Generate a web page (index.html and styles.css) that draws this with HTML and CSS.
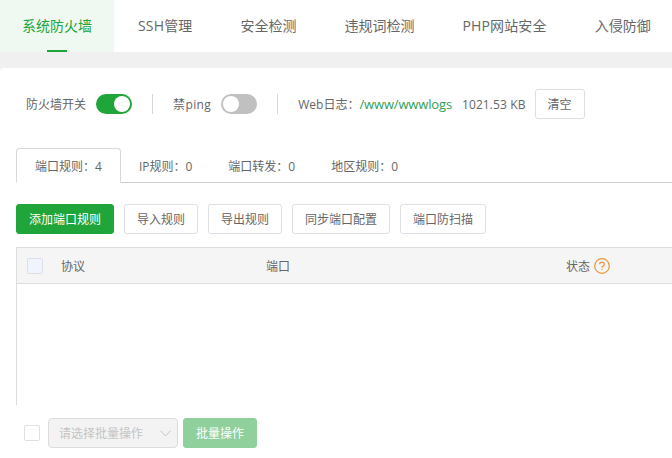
FILE: index.html
```html
<!DOCTYPE html>
<html lang="zh-CN">
<head>
<meta charset="utf-8">
<title>系统防火墙</title>
<link rel="stylesheet" href="styles.css">
</head>
<body>
<nav class="nav">
  <a class="nav-item first active">系统防火墙</a>
  <a class="nav-item latin">SSH管理</a>
  <a class="nav-item">安全检测</a>
  <a class="nav-item">违规词检测</a>
  <a class="nav-item latin">PHP网站安全</a>
  <a class="nav-item">入侵防御</a>
</nav>
<main class="card">
  <div class="status-row">
    <span class="label">防火墙开关</span>
    <span class="switch on"></span>
    <span class="divider"></span>
    <span class="label ping">禁ping</span>
    <span class="switch"></span>
    <span class="divider"></span>
    <span class="label">Web日志：<a class="log-path">/www/wwwlogs</a></span>
    <span class="label size">1021.53 KB</span>
    <button class="btn clear">清空</button>
  </div>
  <div class="tabs">
    <a class="tab active">端口规则：4</a>
    <a class="tab">IP规则：0</a>
    <a class="tab">端口转发：0</a>
    <a class="tab">地区规则：0</a>
  </div>
  <div class="actions">
    <button class="btn primary">添加端口规则</button>
    <button class="btn">导入规则</button>
    <button class="btn">导出规则</button>
    <button class="btn">同步端口配置</button>
    <button class="btn">端口防扫描</button>
  </div>
  <div class="table">
    <div class="thead">
      <span class="check tinted"></span>
      <span class="col-proto">协议</span>
      <span class="col-port">端口</span>
      <span class="col-status">状态
        <svg class="help" width="16" height="16" viewBox="0 0 16 16" aria-hidden="true">
          <circle cx="8" cy="8" r="7.3" fill="none" stroke="#e8963c" stroke-width="1.2"/>
          <path d="M5.7 6.3C5.7 5 6.7 4.1 8 4.1s2.3.9 2.3 2.1c0 1.7-2.3 1.8-2.3 3.5" fill="none" stroke="#e8963c" stroke-width="1.2"/>
          <rect x="7.4" y="10.8" width="1.2" height="1.3" fill="#e8963c"/>
        </svg>
      </span>
    </div>
  </div>
  <div class="footer">
    <span class="check"></span>
    <div class="select">
      <span>请选择批量操作</span>
      <svg width="11" height="7" viewBox="0 0 11 7" aria-hidden="true"><path d="M.5.7l5 5.3 5-5.3" fill="none" stroke="#c4c4c4" stroke-width="1"/></svg>
    </div>
    <button class="btn primary disabled">批量操作</button>
  </div>
</main>
</body>
</html>
```

FILE: styles.css
```css
* { box-sizing: border-box; }
html, body { margin: 0; height: 458px; overflow: hidden; }
body {
  background: #f0f0f0;
  font-family: "Open Sans", "Noto Sans CJK SC", sans-serif;
  font-size: 12px;
  color: #666;
}
.nav {
  display: flex;
  height: 52px;
  background: #fff;
  border-radius: 0 0 0 4px;
  overflow: hidden;
  white-space: nowrap;
}
.nav-item {
  flex: none;
  position: relative;
  padding: 0 24px;
  font-size: 14px;
  line-height: 52px;
  color: #666;
}
.nav-item.latin { letter-spacing: .15px; }
.nav-item.first { padding: 0 22px; }
.nav-item.active { background: #eff8f1; color: #20a53a; }
.nav-item.active::after {
  content: "";
  position: absolute;
  left: 47px;
  bottom: 0;
  width: 20px;
  height: 2px;
  background: #20a53a;
}
.card {
  margin-top: 16px;
  height: 390px;
  padding: 21px 0 0 16px;
  background: #fff;
  border-radius: 4px 0 0 0;
  overflow: hidden;
}
.status-row {
  display: flex;
  align-items: center;
  height: 30px;
  padding-left: 10px;
}
.label { white-space: nowrap; }
.ping { letter-spacing: .4px; }
.size { letter-spacing: .1px; }
.log-path { color: #2f9e58; font-size: 13px; letter-spacing: -.15px; }
.switch {
  position: relative;
  width: 36px;
  height: 20px;
  margin-left: 10px;
  border-radius: 10px;
  background: #c0c0c0;
}
.switch::after {
  content: "";
  position: absolute;
  top: 2px;
  left: 2px;
  width: 16px;
  height: 16px;
  border-radius: 50%;
  background: #fff;
}
.switch.on { background: #20a53a; }
.switch.on::after { left: 18px; }
.divider {
  width: 1px;
  height: 20px;
  margin: 0 20px;
  background: #d8d8d8;
}
.label + .label { margin-left: 10px; }
.btn {
  height: 30px;
  padding: 0 12px;
  border: 1px solid #dcdfe6;
  border-radius: 3px;
  background: #fff;
  color: #666;
  font: inherit;
  white-space: nowrap;
}
.clear { width: 50px; margin-left: 9px; }
.tabs {
  display: flex;
  height: 35px;
  margin-top: 29px;
  border-bottom: 1px solid #ccc;
}
.tab {
  height: 35px;
  padding: 0 18px;
  line-height: 37px;
  white-space: nowrap;
}
.tab.active {
  padding: 0 18px;
  background: #fff;
  border: 1px solid #d8d8d8;
  border-bottom: 1px solid #fff;
  border-radius: 4px 4px 0 0;
  line-height: 35px;
}
.actions {
  display: flex;
  gap: 10px;
  margin-top: 21px;
}
.btn.primary {
  border-color: #20a53a;
  background: #20a53a;
  color: #fff;
}
.table {
  width: 800px;
  height: 158px;
  margin-top: 13px;
  border-left: 1px solid #ddd;
  border-top: 1px solid #ddd;
}
.thead {
  display: flex;
  align-items: center;
  position: relative;
  height: 36px;
  background: #f5f5f5;
  border-bottom: 1px solid #ddd;
}
.check {
  flex: none;
  width: 16px;
  height: 16px;
  border: 1px solid #dcdfe6;
  border-radius: 2px;
  background: #fff;
}
.check.tinted { margin-left: 10px; background: #f0f4fc; }
.col-proto { margin-left: 18px; width: 205px; }
.col-port { width: 300px; }
.col-status { display: flex; align-items: center; gap: 4px; }
.help { display: block; }
.footer {
  display: flex;
  align-items: center;
  height: 30px;
  margin-top: 13px;
  padding-left: 8px;
}
.select {
  display: flex;
  align-items: center;
  justify-content: space-between;
  width: 130px;
  height: 30px;
  margin-left: 8px;
  padding: 0 6px 0 10px;
  border: 1px solid #dcdcdc;
  border-radius: 4px;
  background: #f3f3f3;
  color: #c4c4c4;
}
.btn.primary.disabled {
  width: 74px;
  margin-left: 5px;
  border-color: #8fd09d;
  background: #8fd09d;
}
```
